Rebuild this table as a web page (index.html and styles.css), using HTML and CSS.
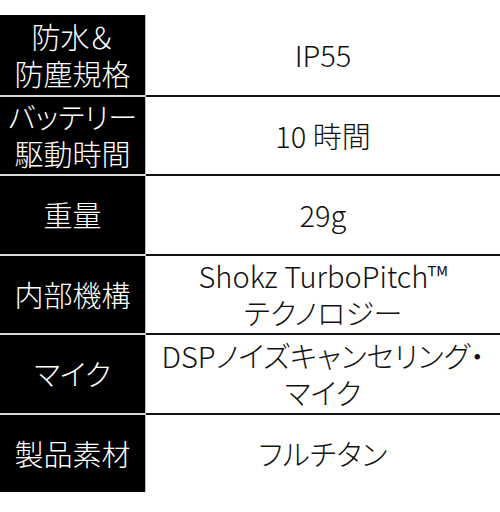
FILE: index.html
```html
<!DOCTYPE html>
<html lang="ja">
<head>
<meta charset="utf-8">
<link rel="stylesheet" href="styles.css">
</head>
<body>
<div class="spec">
  <div class="row">
    <div class="label">防水＆<br>防塵規格</div>
    <div class="value">IP55</div>
  </div>
  <div class="row">
    <div class="label">バッテリー<br>駆動時間</div>
    <div class="value">10 時間</div>
  </div>
  <div class="row">
    <div class="label">重量</div>
    <div class="value">29g</div>
  </div>
  <div class="row">
    <div class="label">内部機構</div>
    <div class="value">Shokz TurboPitch™<br>テクノロジー</div>
  </div>
  <div class="row">
    <div class="label">マイク</div>
    <div class="value">DSPノイズキャンセリング・<br>マイク</div>
  </div>
  <div class="row">
    <div class="label">製品素材</div>
    <div class="value">フルチタン</div>
  </div>
</div>
</body>
</html>
```
FILE: styles.css
```css
html, body {
  margin: 0;
  padding: 0;
  background: #fff;
}
body {
  padding-top: 15px;
  font-family: "Noto Sans CJK JP", "Noto Sans", sans-serif;
  font-feature-settings: "palt";
}
.spec {
  width: 500px;
  height: 477px;
  display: grid;
  grid-template-rows: repeat(6, 1fr);
}
.row {
  display: grid;
  grid-template-columns: 146px 1fr;
}
.label, .value {
  display: flex;
  align-items: center;
  justify-content: center;
  text-align: center;
  font-size: 29px;
  font-weight: 300;
  line-height: 37px;
}
.label {
  background: #000;
  color: #fff;
  border-right: 1px solid #bdbdbd;
}
.value {
  color: #111;
}
.row + .row .label {
  border-top: 2px solid #d8d8d8;
}
.row + .row .value {
  border-top: 2px solid #111;
}
```
